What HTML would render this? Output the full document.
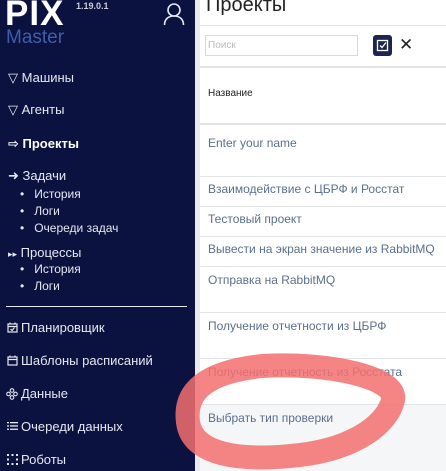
<!DOCTYPE html>
<html><head><meta charset="utf-8"><style>
*{margin:0;padding:0;box-sizing:border-box}
body{width:446px;height:471px;overflow:hidden;background:#fff;font-family:"Liberation Sans","DejaVu Sans",sans-serif;position:relative}
.sb{position:absolute;left:0;top:0;width:195px;height:471px;background:#0b1240;color:#e6e8f0}
.strip{position:absolute;left:195px;top:0;width:5px;height:471px;background:#e9eaee}
.t{position:absolute;white-space:nowrap;font-size:13px}
.sub{font-size:12px}
.line{position:absolute;height:1px;background:#e3e4e8;left:200px;right:0}
.it{position:absolute;left:208px;font-size:12px;color:#5a6f8c;white-space:nowrap}
.ic{position:absolute}
</style></head><body>
<div class="sb">
 <div class="t" style="left:5px;top:-6px;font-size:35px;font-weight:bold;color:#fff;letter-spacing:1px">PIX</div>
 <div class="t" style="left:76px;top:1px;font-size:9px;font-weight:bold;color:#ccd">1.19.0.1</div>
 <div class="t" style="left:6px;top:27px;font-size:19px;color:#3d5fa8">Master</div>
 <svg style="position:absolute;left:163px;top:2px" width="22" height="24" viewBox="0 0 22 24" fill="none" stroke="#e6e8f0" stroke-width="1.6"><circle cx="11" cy="8" r="6"/><path d="M1.5 23c0-6 4-9 9.5-9s9.5 3 9.5 9"/></svg>
 <div class="t" style="left:8px;top:70px">▽ Машины</div>
 <div class="t" style="left:8px;top:102px">▽ Агенты</div>
 <div class="t" style="left:8px;top:136px;font-weight:bold;color:#fff">⇨ Проекты</div>
 <div class="t" style="left:8px;top:168px">➜ Задачи</div>
 <div class="t sub" style="left:20px;top:187px">•&nbsp;&nbsp;&nbsp;История</div>
 <div class="t sub" style="left:20px;top:204px">•&nbsp;&nbsp;&nbsp;Логи</div>
 <div class="t sub" style="left:20px;top:221px">•&nbsp;&nbsp;&nbsp;Очереди задач</div>
 <div class="t" style="left:8px;top:245px"><span style="font-size:9px">▸▸</span> Процессы</div>
 <div class="t sub" style="left:20px;top:262px">•&nbsp;&nbsp;&nbsp;История</div>
 <div class="t sub" style="left:20px;top:279px">•&nbsp;&nbsp;&nbsp;Логи</div>
 <div style="position:absolute;left:6px;top:306px;width:181px;height:1px;background:#e6e8f0"></div>
 <svg class="ic" style="left:7px;top:322px" width="11" height="11" viewBox="0 0 11 11" fill="none" stroke="#e6e8f0" stroke-width="1.2"><rect x="1" y="2" width="9" height="8"/><path d="M1 4.5h9M3 0.5v2M8 0.5v2M3.5 7l1.5 1.5 2.5-3"/></svg>
 <div class="t" style="left:21px;top:320px">Планировщик</div>
 <svg class="ic" style="left:7px;top:355px" width="11" height="11" viewBox="0 0 11 11" fill="none" stroke="#e6e8f0" stroke-width="1.2"><rect x="1" y="2" width="9" height="8"/><path d="M1 4.5h9M3 0.5v2M8 0.5v2"/></svg>
 <div class="t" style="left:21px;top:353px">Шаблоны расписаний</div>
 <svg class="ic" style="left:6px;top:388px" width="12" height="12" viewBox="0 0 12 12" fill="none" stroke="#e6e8f0" stroke-width="1.1"><circle cx="6" cy="2.5" r="1.8"/><circle cx="2.5" cy="6" r="1.8"/><circle cx="9.5" cy="6" r="1.8"/><circle cx="6" cy="9.5" r="1.8"/></svg>
 <div class="t" style="left:21px;top:386px">Данные</div>
 <svg class="ic" style="left:7px;top:421px" width="11" height="10" viewBox="0 0 11 10" fill="#e6e8f0"><rect x="0" y="1" width="2" height="1.3"/><rect x="3" y="1" width="8" height="1.3"/><rect x="0" y="4.3" width="2" height="1.3"/><rect x="3" y="4.3" width="8" height="1.3"/><rect x="0" y="7.6" width="2" height="1.3"/><rect x="3" y="7.6" width="8" height="1.3"/></svg>
 <div class="t" style="left:21px;top:419px">Очереди данных</div>
 <svg class="ic" style="left:7px;top:454px" width="11" height="11" viewBox="0 0 11 11" fill="#e6e8f0"><rect x="0" y="0" width="2" height="2"/><rect x="4.5" y="0" width="2" height="2"/><rect x="9" y="0" width="2" height="2"/><rect x="0" y="4.5" width="2" height="2"/><rect x="9" y="4.5" width="2" height="2"/><rect x="0" y="9" width="2" height="2"/><rect x="4.5" y="9" width="2" height="2"/><rect x="9" y="9" width="2" height="2"/></svg>
 <div class="t" style="left:21px;top:452px">Роботы</div>
</div>
<div class="strip"></div>
<div class="t" style="left:206px;top:-6px;font-size:20px;color:#222">Проекты</div>
<div class="line" style="top:25px"></div>
<div style="position:absolute;left:205px;top:35px;width:153px;height:21px;border:1px solid #d8d9dd;font-size:10px;color:#bbb;padding:4px 2px">Поиск</div>
<div style="position:absolute;left:373px;top:35px;width:19px;height:21px;background:#1c2550;border-radius:3px"></div>
<svg style="position:absolute;left:376px;top:39px" width="13" height="13" viewBox="0 0 13 13" fill="none" stroke="#fff" stroke-width="1.3"><rect x="1.5" y="1.5" width="10" height="10"/><path d="M4 6.5l2 2 4-5"/></svg>
<div class="t" style="left:399px;top:35px;font-size:17px;color:#222">✕</div>
<div class="line" style="top:66px;height:2px"></div>
<div class="t" style="left:208px;top:88px;font-size:10px;color:#222">Название</div>
<div class="line" style="top:123px;height:2px"></div>
<div class="it" style="top:136px">Enter your name</div>
<div class="line" style="top:176px"></div>
<div class="it" style="top:182px">Взаимодействие с ЦБРФ и Росстат</div>
<div class="line" style="top:206px"></div>
<div class="it" style="top:212px">Тестовый проект</div>
<div class="line" style="top:236px"></div>
<div class="it" style="top:242px">Вывести на экран значение из RabbitMQ</div>
<div class="line" style="top:266px"></div>
<div class="it" style="top:273px">Отправка на RabbitMQ</div>
<div class="line" style="top:312px"></div>
<div class="it" style="top:319px">Получение отчетности из ЦБРФ</div>
<div class="line" style="top:358px"></div>
<div class="it" style="top:365px">Получение отчетность из Росстата</div>
<div style="position:absolute;left:200px;top:404px;right:0;bottom:0;background:#f5f6f8;border-top:1px solid #e3e4e8"></div>
<div class="it" style="top:411px">Выбрать тип проверки</div>
<svg style="position:absolute;left:0;top:0" width="446" height="471"><path d="M393 400 C398 378 330 362 262 366 C205 372 184 392 188 422 C192 455 240 462 300 455 C358 448 388 422 393 400 Z" fill="none" stroke="#f37070" stroke-opacity="0.85" stroke-width="24"/></svg>
</body></html>
